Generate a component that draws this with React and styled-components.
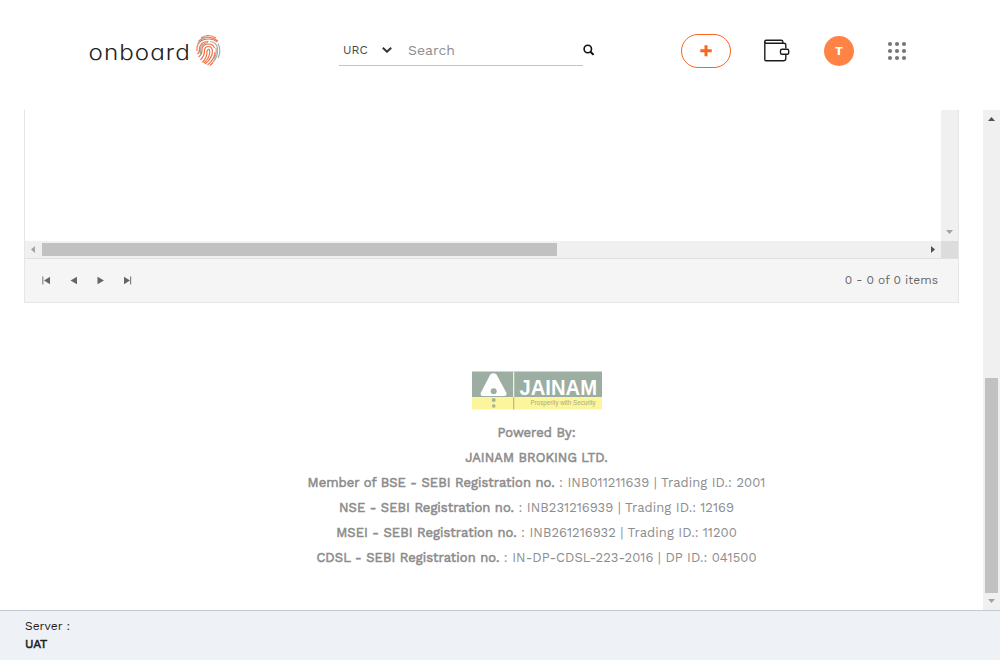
import React from 'react';
import styled, { createGlobalStyle } from 'styled-components';

const GlobalStyle = createGlobalStyle`
  * { box-sizing: border-box; }
  body {
    margin: 0;
    background: #fff;
    font-family: "Work Sans", Inter, "Liberation Sans", sans-serif;
    overflow: hidden;
  }
`;

const Page = styled.div`
  display: flex;
  flex-direction: column;
  width: 1000px;
  height: 660px;
`;

const Header = styled.header`
  display: flex;
  align-items: flex-start;
  height: 110px;
  padding: 34px 0 0 88px;
`;

const Brand = styled.div`
  display: flex;
  width: 251px;
`;

const BrandName = styled.span`
  width: 107px;
  padding: 1px 0 0 0.5px;
  font-family: Inter, sans-serif;
  font-size: 22px;
  line-height: 34px;
  font-weight: 300;
  letter-spacing: 0.95px;
  font-feature-settings: "cv11";
  color: #222;
  transform: scaleX(1.1);
  transform-origin: left;
`;

const SearchBar = styled.div`
  display: flex;
  align-items: center;
  width: 244px;
  height: 32px;
  border-bottom: 1px solid #c4c4c4;
`;

const Category = styled.span`
  width: 43px;
  padding-left: 4px;
  font-size: 12px;
  color: #444;
`;

const SearchText = styled.span`
  margin-left: 16px;
  padding-top: 1px;
  font-size: 14px;
  color: #8e8e8e;
`;

const SearchIcon = styled.svg`
  margin: 10px 86px 0 0;
`;

const AddButton = styled.button`
  display: flex;
  align-items: center;
  justify-content: center;
  width: 50px;
  height: 34px;
  padding: 0;
  border: 1px solid #fb641b;
  border-radius: 17px;
  background: #fff;
`;

const Wallet = styled.svg`
  margin: 4px 0 0 32px;
`;

const Avatar = styled.div`
  width: 30px;
  height: 30px;
  margin: 2px 0 0 34px;
  border-radius: 50%;
  background: #ff8345;
  color: #fff;
  font-size: 12px;
  font-weight: 700;
  line-height: 30px;
  text-align: center;
`;

const Apps = styled.svg`
  margin: 7px 0 0 33px;
`;

const Main = styled.main`
  display: flex;
  height: 500px;
`;

const Content = styled.div`
  width: 983px;
`;

const Grid = styled.section`
  width: 935px;
  height: 193px;
  margin-left: 24px;
  border: solid #e6e6e6;
  border-width: 0 1px 1px;
`;

const GridBody = styled.div`
  display: flex;
  justify-content: flex-end;
  height: 131px;
`;

const VerticalBar = styled.div`
  display: flex;
  flex-direction: column;
  align-items: center;
  justify-content: space-between;
  width: 17px;
  height: 100%;
  padding: 7px 0;
  background: #f0f0f0;
`;

const VerticalThumb = styled.div`
  width: 13px;
  height: 215px;
  margin: auto 0 6px;
  background: #c1c1c1;
`;

const HorizontalBar = styled.div`
  display: flex;
  align-items: center;
  height: 17px;
  background: #f0f0f0;
`;

const HorizontalThumb = styled.div`
  width: 515px;
  height: 13px;
  margin: 0 auto 0 7px;
  background: #c1c1c1;
`;

const Corner = styled.div`
  width: 17px;
  height: 17px;
  margin-left: 6px;
  background: #dcdcdc;
`;

const directions = {
  up: 'polygon(50% 0, 100% 100%, 0 100%)',
  down: 'polygon(0 0, 100% 0, 50% 100%)',
  left: 'polygon(100% 0, 100% 100%, 0 50%)',
  right: 'polygon(0 0, 100% 50%, 0 100%)',
};

const Arrow = styled.i`
  flex: none;
  width: ${({ $dir }) => ($dir === 'up' || $dir === 'down' ? 7 : 4)}px;
  height: ${({ $dir }) => ($dir === 'up' || $dir === 'down' ? 4 : 7)}px;
  margin: ${({ $dir }) => ($dir === 'left' ? '0 0 0 6px' : '0')};
  clip-path: ${({ $dir }) => directions[$dir]};
  background: ${({ $muted }) => ($muted ? '#a3a3a3' : '#505050')};
`;

const Pager = styled.div`
  display: flex;
  align-items: center;
  height: 44px;
  padding: 0 20px 1px 17px;
  border-top: 1px solid #e0e0e0;
  background: #f5f5f5;
`;

const PagerIcon = styled.svg`
  width: 9px;
  height: 9px;
  margin-right: ${({ $gap }) => $gap}px;
  fill: #666;
`;

const PagerInfo = styled.span`
  margin-left: auto;
  font-size: 12px;
  color: #656565;
`;

const Credits = styled.section`
  display: flex;
  flex-direction: column;
  align-items: center;
  padding: 68px 0 0 91px;
  color: #8d8d8d;
`;

const Line = styled.p`
  margin: 0 1px 0 0;
  font-size: 13px;
  line-height: 25px;
  letter-spacing: 0.035px;
  white-space: pre;
`;

const Strong = styled.b`
  font-weight: 400;
  -webkit-text-stroke: 0.55px currentColor;
`;

const CreditsLogo = styled.svg`
  margin-bottom: 10px;
`;

const StatusBar = styled.footer`
  height: 50px;
  padding: 6px 25px 0;
  border-top: 1px solid #c5cbd3;
  background: #eef2f6;
  color: #222;
  font-size: 12px;
  line-height: 18px;
`;

const StatusLabel = styled.div``;

const StatusValue = styled.div`
  -webkit-text-stroke: 0.55px currentColor;
`;

const Fingerprint = () => (
  <svg width="26" height="33" viewBox="-1 0 26 33" fill="none" strokeWidth="1.15">
    <g stroke="#f27043">
      <path d="M5 4Q12 -1 20 4M2.5 7Q12 -.5 22 7" />
      <path d="M1 17V13Q3 5 12.5 5Q18 5 21 8" />
      <path d="M1.5 20Q4 18 3.5 15Q4 7.5 12.5 7.5" />
      <path d="M2.6 23Q6.5 20 6 15Q7 10 12.5 10Q17 10 18.6 14" />
      <path d="M4.5 26Q9 21 8.5 16Q9 12.5 12.5 12.5Q16 12.5 16.5 17Q16.5 24 9 30" />
      <path d="M6.5 28.5Q11.5 23 11 17Q11.5 15 13 15.5Q14.5 17 13.5 20Q12.5 25 8 29" />
      <path d="M11.5 31Q19 25 19 18M14 31.5L17 28.5" />
    </g>
    <g stroke="#aaa">
      <path d="M14 7.5Q21 8 21.5 15Q22 23 17 28" />
      <path d="M22 9.5Q24.5 14 23.5 20L22 24" />
      <path d="M1.5 10Q6 3 12 3M4.5 21V16Q5 9 12 8.8" />
      <path d="M20 14Q21 20 18 25" />
    </g>
  </svg>
);

const JainamLogo = () => (
  <CreditsLogo width="130" height="39" viewBox="0 0 130 39">
    <path fill="#9cada1" d="M0 .5H130V26H0Z" />
    <path fill="#fdf59b" d="M0 26H130V38.5H0Z" />
    <path fill="#fff" d="M18.3 3.5Q21.5 1 24.5 3.5L34.5 22Q35 25 32 25H11Q8 25 8.7 22Z" />
    <circle cx="21.7" cy="20.2" r="3" fill="#9cada1" />
    <circle cx="21.7" cy="29" r="2" fill="#a5b299" />
    <circle cx="21.7" cy="35" r="1.8" fill="#a5b299" />
    <path fill="#eef0da" d="M41 .5H42.3V26H41Z" />
    <path fill="#b4bf9c" d="M41 26H42.3V38.5H41Z" />
    <text transform="translate(47.5 23.8) scale(.92 1)" fill="#fff" fontFamily="Liberation Sans, sans-serif" fontWeight="700" fontSize="22">JAINAM</text>
    <text transform="translate(58.5 34.3) scale(.82 1)" fill="#a7ac84" fontFamily="Liberation Sans, sans-serif" fontSize="7.6">Prosperity with Security</text>
  </CreditsLogo>
);

const members = [
  { label: 'Member of BSE - SEBI Registration no.', value: ' : INB011211639 | Trading ID.: 2001' },
  { label: 'NSE - SEBI Registration no.', value: ' : INB231216939 | Trading ID.: 12169' },
  { label: 'MSEI - SEBI Registration no.', value: ' : INB261216932 | Trading ID.: 11200' },
  { label: 'CDSL - SEBI Registration no.', value: ' : IN-DP-CDSL-223-2016 | DP ID.: 041500' },
];

const dots = [3, 10, 17];

export default function App() {
  return (
    <Page>
      <GlobalStyle />
      <Header>
        <Brand>
          <BrandName>onboard</BrandName>
          <Fingerprint />
        </Brand>
        <SearchBar>
          <Category>URC</Category>
          <svg width="10" height="7" viewBox="0 0 10 7" fill="none" stroke="#333" strokeWidth="2">
            <path d="M.8 1.7L5 5.7L9.2 1.7" />
          </svg>
          <SearchText>Search</SearchText>
        </SearchBar>
        <SearchIcon width="12" height="12" viewBox="0 0 12 12" fill="none" stroke="#111" strokeWidth="1.6">
          <circle cx="4.8" cy="5" r="3.7" />
          <path d="M7.5 7.8L10.6 10.9" strokeWidth="2" />
        </SearchIcon>
        <AddButton aria-label="Add">
          <svg width="12" height="12" viewBox="0 0 12 12">
            <path d="M4.5 .3H7.5V4.3H11.7V7.3H7.5V11.3H4.5V7.3H.3V4.3H4.5Z" fill="#fb641b" />
          </svg>
        </AddButton>
        <Wallet width="27" height="24" viewBox="0 0 27 24" fill="none" stroke="#1c1c1c" strokeWidth="1.4">
          <path d="M22.8 10.5V7Q22.8 5.2 21 5.2H3Q1.8 5.2 1.8 3.6Q1.8 2.2 3.2 2.2H18.3Q19.8 2.2 19.8 3.6V5.2" />
          <path d="M1.8 3.4V21.6Q1.8 22.8 3 22.8H20.3Q22.8 22.8 22.8 20.5V16.2" />
          <rect x="17.5" y="11.3" width="8.2" height="5" rx="1.5" />
        </Wallet>
        <Avatar>T</Avatar>
        <Apps width="20" height="20" viewBox="0 0 20 20" fill="#77777b">
          {dots.map((y) => dots.map((x) => <circle key={`${x}-${y}`} cx={x} cy={y} r="2.1" />))}
        </Apps>
      </Header>
      <Main>
        <Content>
          <Grid>
            <GridBody>
              <VerticalBar>
                <span />
                <Arrow $dir="down" $muted />
              </VerticalBar>
            </GridBody>
            <HorizontalBar>
              <Arrow $dir="left" $muted />
              <HorizontalThumb />
              <Arrow $dir="right" />
              <Corner />
            </HorizontalBar>
            <Pager>
              <PagerIcon $gap={18} viewBox="0 0 9 9"><path d="M0 .5H1.5V8.5H0Z" opacity=".6" /><path d="M8 .8V8.2L2 4.5Z" /></PagerIcon>
              <PagerIcon $gap={19} viewBox="0 0 9 9"><path d="M8 .8V8.2L1.5 4.5Z" /></PagerIcon>
              <PagerIcon $gap={17} viewBox="0 0 9 9"><path d="M.5 .8V8.2L7 4.5Z" /></PagerIcon>
              <PagerIcon $gap={0} viewBox="0 0 9 9"><path d="M1 .8V8.2L7 4.5Z" /><path d="M7 .5H8.2V8.5H7Z" opacity=".8" /></PagerIcon>
              <PagerInfo>0 - 0 of 0 items</PagerInfo>
            </Pager>
          </Grid>
          <Credits>
            <JainamLogo />
            <Line><Strong>Powered By:</Strong></Line>
            <Line><Strong>JAINAM BROKING LTD.</Strong></Line>
            {members.map(({ label, value }) => (
              <Line key={label}><Strong>{label}</Strong>{value}</Line>
            ))}
          </Credits>
        </Content>
        <VerticalBar>
          <Arrow $dir="up" />
          <VerticalThumb />
          <Arrow $dir="down" $muted />
        </VerticalBar>
      </Main>
      <StatusBar>
        <StatusLabel>Server :</StatusLabel>
        <StatusValue>UAT</StatusValue>
      </StatusBar>
    </Page>
  );
}
